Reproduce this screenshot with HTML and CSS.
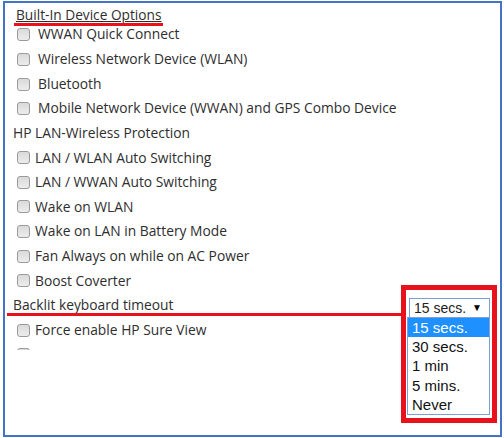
FILE: index.html
```html
<!DOCTYPE html>
<html lang="en">
<head>
<meta charset="UTF-8" />
<title>Built-In Device Options</title>
<link rel="stylesheet" href="styles.css">
</head>
<body>

<div class="panel">
  <div class="panel-title"><span>Built-In Device Options</span></div>

  <div class="panel-body">
    <div class="options">
      <label class="opt"><input type="checkbox" /> WWAN Quick Connect</label>
      <label class="opt"><input type="checkbox" /> Wireless Network Device (WLAN)</label>
      <label class="opt"><input type="checkbox" /> Bluetooth</label>
      <label class="opt"><input type="checkbox" /> Mobile Network Device (WWAN) and GPS Combo Device</label>

      <div class="group-title">HP LAN-Wireless Protection</div>
      <label class="opt opt-tight"><input type="checkbox" /> LAN / WLAN Auto Switching</label>
      <label class="opt opt-tight"><input type="checkbox" /> LAN / WWAN Auto Switching</label>
      <label class="opt opt-tight"><input type="checkbox" /> Wake on WLAN</label>
      <label class="opt opt-tight"><input type="checkbox" /> Wake on LAN in Battery Mode</label>
      <label class="opt opt-tight"><input type="checkbox" /> Fan Always on while on AC Power</label>
      <label class="opt opt-tight"><input type="checkbox" /> Boost Coverter</label>

      <div class="group-title select-row">
        <span>Backlit keyboard timeout</span>
        <div class="fake-select">15 secs. <span class="arrow">&#9660;</span></div>
      </div>
      <label class="opt opt-tight"><input type="checkbox" /> Force enable HP Sure View</label>
      <label class="opt opt-tight"><input type="checkbox" /></label>
    </div>
  </div>

  <!-- open list of the timeout select -->
  <ul class="dropdown">
    <li class="selected">15 secs.</li>
    <li>30 secs.</li>
    <li>1 min</li>
    <li>5 mins.</li>
    <li>Never</li>
  </ul>

  <!-- red annotations -->
  <div class="mark mark-title"></div>
  <div class="mark mark-line"></div>
  <div class="mark mark-box"></div>
</div>

</body>
</html>
```

FILE: styles.css
```css
body {
  margin: 0;
  background: #fff;
  font-family: "Open Sans", "Noto Sans", sans-serif;
  color: #2e2e2e;
}
.panel {
  position: relative;
  box-sizing: border-box;
  width: 499px;
  height: 436px;
  margin: 1px 0 0 3px;
  border: 2px solid #4472c4;
  background: #fff;
}
.panel-title {
  height: 19px;
  padding-left: 11px;
  font-size: 13.7px;
  line-height: 24px;
}
.panel-title span {
  text-decoration: underline;
}
.panel-body {
  height: 328px;
  overflow: hidden;
}
.options {
  font-size: 13.8px;
}
.opt {
  display: flex;
  align-items: center;
  height: 24.65px;
  line-height: 14px;
  white-space: nowrap;
}
.opt input {
  appearance: none;
  -webkit-appearance: none;
  box-sizing: border-box;
  width: 13px;
  height: 13px;
  margin: 1px 8px 0 12px;
  border: 1px solid #9a9a9a;
  border-radius: 3px;
  background: linear-gradient(#dadada, #ececec);
}
.opt-tight input {
  margin: 0 5px 0 12px;
}
.group-title {
  height: 24.65px;
  line-height: 24.65px;
  padding-left: 8px;
}
.select-row {
  display: flex;
  align-items: center;
  justify-content: space-between;
}
.fake-select {
  box-sizing: border-box;
  width: 81px;
  height: 20px;
  margin: 5px 10px 0 0;
  padding-left: 4px;
  border: 1px solid #7e9fd6;
  font-family: "Liberation Sans", Arial, sans-serif;
  font-size: 14px;
  line-height: 18px;
  color: #222;
}
.arrow {
  float: right;
  margin-right: 7px;
  font-size: 10px;
  color: #000;
}
.dropdown {
  position: absolute;
  left: 402px;
  top: 314px;
  box-sizing: border-box;
  width: 83px;
  margin: 0;
  padding: 0;
  list-style: none;
  border: 1px solid #7e9fd6;
  background: #fff;
  font-family: "Liberation Sans", Arial, sans-serif;
  font-size: 15px;
  color: #111;
}
.dropdown li {
  height: 19.2px;
  line-height: 19.2px;
  padding-left: 4px;
}
.dropdown .selected {
  background: #1e90ff;
  color: #fff;
}
.mark {
  position: absolute;
  background: #e8121c;
}
.mark-title {
  left: 9px;
  top: 20px;
  width: 149px;
  height: 3px;
}
.mark-line {
  left: 2px;
  top: 310px;
  width: 396px;
  height: 3px;
}
.mark-box {
  left: 396px;
  top: 282px;
  box-sizing: border-box;
  width: 96px;
  height: 138px;
  border: 5px solid #e8121c;
  background: transparent;
}
```
